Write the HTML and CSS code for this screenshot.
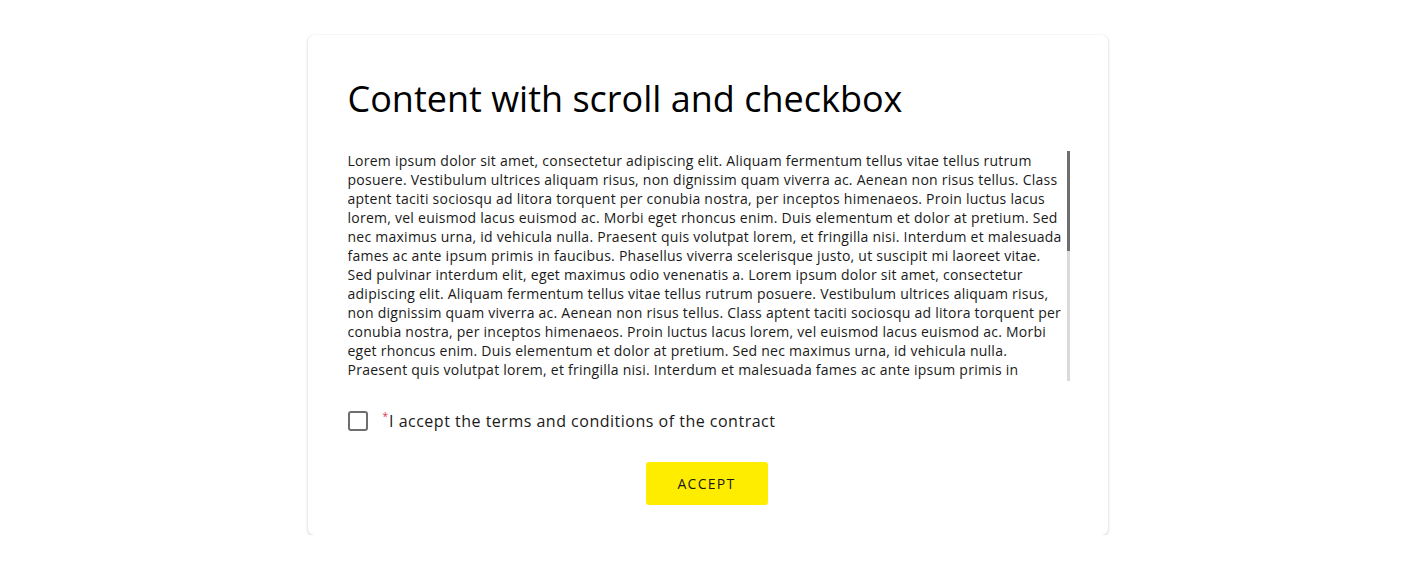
FILE: index.html
```html
<!DOCTYPE html>
<html lang="en">
<head>
<meta charset="utf-8">
<title>Content with scroll and checkbox</title>
<link rel="stylesheet" href="styles.css">
</head>
<body>
<main class="page">
  <section class="card">
    <h1 class="title">Content with scroll and checkbox</h1>
    <div class="scroll-wrap">
      <div class="scroll">
        <p class="copy">Lorem ipsum dolor sit amet, consectetur adipiscing elit. Aliquam fermentum tellus vitae tellus rutrum posuere. Vestibulum ultrices aliquam risus, non dignissim quam viverra ac. Aenean non risus tellus. Class aptent taciti sociosqu ad litora torquent per conubia nostra, per inceptos himenaeos. Proin luctus lacus lorem, vel euismod lacus euismod ac. Morbi eget rhoncus enim. Duis elementum et dolor at pretium. Sed nec maximus urna, id vehicula nulla. Praesent quis volutpat lorem, et fringilla nisi. Interdum et malesuada fames ac ante ipsum primis in faucibus. Phasellus viverra scelerisque justo, ut suscipit mi laoreet vitae. Sed pulvinar interdum elit, eget maximus odio venenatis a. Lorem ipsum dolor sit amet, consectetur adipiscing elit. Aliquam fermentum tellus vitae tellus rutrum posuere. Vestibulum ultrices aliquam risus, non dignissim quam viverra ac. Aenean non risus tellus. Class aptent taciti sociosqu ad litora torquent per conubia nostra, per inceptos himenaeos. Proin luctus lacus lorem, vel euismod lacus euismod ac. Morbi eget rhoncus enim. Duis elementum et dolor at pretium. Sed nec maximus urna, id vehicula nulla. Praesent quis volutpat lorem, et fringilla nisi. Interdum et malesuada fames ac ante ipsum primis in faucibus. Phasellus viverra scelerisque justo, ut suscipit mi laoreet vitae. Sed pulvinar interdum elit, eget maximus odio venenatis a. Lorem ipsum dolor sit amet, consectetur adipiscing elit. Aliquam fermentum tellus vitae tellus rutrum posuere. Vestibulum ultrices aliquam risus, non dignissim quam viverra ac. Aenean non risus tellus. Class aptent taciti sociosqu ad litora torquent per conubia nostra, per inceptos himenaeos. Proin luctus lacus lorem, vel euismod lacus euismod ac. Morbi eget rhoncus enim. Duis elementum et dolor at pretium. Sed nec maximus urna, id vehicula nulla. Praesent quis volutpat lorem, et fringilla nisi. Interdum et malesuada fames ac ante ipsum primis in faucibus. Phasellus viverra scelerisque justo, ut suscipit mi laoreet vitae. Sed pulvinar interdum elit, eget maximus odio venenatis a. Lorem ipsum dolor sit amet, consectetur adipiscing elit. Aliquam fermentum tellus vitae tellus rutrum posuere. Vestibulum ultrices aliquam risus, non dignissim quam viverra ac. Aenean non risus tellus.</p>
      </div>
      <div class="scrollbar" aria-hidden="true"><div class="scrollbar-thumb"></div></div>
    </div>
    <label class="check">
      <input type="checkbox" class="check-input">
      <span class="check-box"></span>
      <span class="check-label"><span class="req">*</span>I accept the terms and conditions of the contract</span>
    </label>
    <div class="actions">
      <button type="button" class="btn">ACCEPT</button>
    </div>
  </section>
</main>
</body>
</html>
```

FILE: styles.css
```css
* { box-sizing: border-box; }
html, body { margin: 0; padding: 0; background: #fff; }
body {
  font-family: "Open Sans", "Liberation Sans", sans-serif;
  color: #000;
}
.page {
  display: flex;
  justify-content: center;
  padding-top: 35px;
}
.card {
  width: 800px;
  height: 500px;
  border-radius: 6px;
  background: #fff;
  box-shadow: 0 1px 3px rgba(0,0,0,0.2), 0 0 1px rgba(0,0,0,0.1);
  padding: 40px 40px 30px 40px;
  display: flex;
  flex-direction: column;
}
.title {
  margin: 0;
  font-weight: 400;
  font-size: 36px;
  line-height: 48px;
  color: #000;
}
.scroll-wrap {
  margin-top: 28px;
  margin-right: -3px;
  height: 230px;
  display: flex;
}
.scroll {
  flex: 1 1 auto;
  overflow: hidden;
  padding-right: 3px;
}
.scrollbar {
  flex: 0 0 3px;
  width: 3px;
  margin-right: 1px;
  background: #dadada;
}
.scrollbar-thumb {
  height: 100px;
  background: #6e6e6e;
}
.copy {
  margin: 0;
  font-size: 14px;
  line-height: 19px;
  letter-spacing: 0.25px;
  color: #1a1a1a;
}
.check {
  margin-top: 30px;
  display: flex;
  align-items: center;
  cursor: pointer;
  height: 20px;
}
.check-input { display: none; }
.check-box {
  width: 20px;
  height: 20px;
  border: 2px solid #6e6e6e;
  border-radius: 3px;
  flex: 0 0 auto;
}
.check-label {
  margin-left: 15px;
  font-size: 16px;
  letter-spacing: 0.5px;
  color: #1a1a1a;
}
.req {
  color: #e0304e;
  font-size: 10px;
  vertical-align: top;
  position: relative;
  top: -1px;
  margin-right: 1px;
  letter-spacing: 0;
}
.actions {
  margin-top: 31px;
  display: flex;
  justify-content: center;
  padding-right: 2px;
}
.btn {
  width: 122px;
  height: 43px;
  border: none;
  border-radius: 3px;
  background: #ffed00;
  font-family: "Open Sans", "Liberation Sans", sans-serif;
  font-size: 14px;
  letter-spacing: 1.3px;
  color: #1a1a1a;
  cursor: pointer;
}
```
